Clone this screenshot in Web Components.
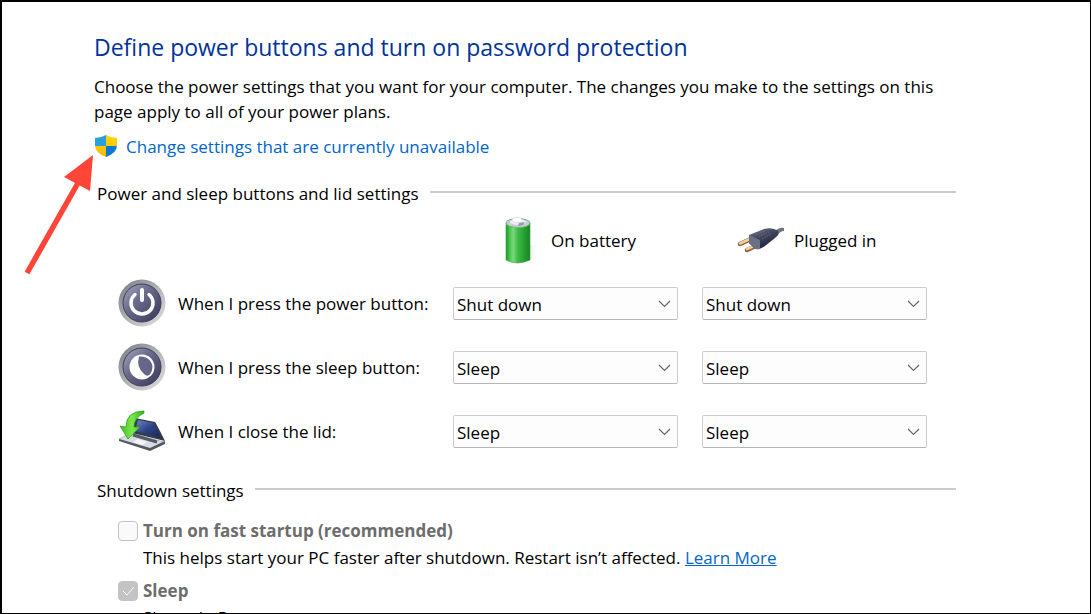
<!DOCTYPE html>
<html lang="en">
<head>
<meta charset="utf-8">
<title>Power button settings</title>
<style>
html,body{margin:0;height:100%}
body{font-family:"Open Sans","Noto Sans",sans-serif;font-size:17px;line-height:25px;color:#000;background:#fff;overflow:hidden}
</style>
</head>
<body>
<power-page></power-page>
<script>
const icons={
shield:`<svg width="24" height="24" viewBox="0 0 24 24"><defs><linearGradient id="y" x2="0" y2="1"><stop stop-color="#ffd900"/><stop offset="1" stop-color="#f9b70b"/></linearGradient><clipPath id="c"><path d="M12 1Q7 4 1 4V11Q1 19 12 23Q23 19 23 11V4Q17 4 12 1Z"/></clipPath></defs><g clip-path="url(#c)"><path fill="#27a0df" d="M0 0h12v12H0z"/><path fill="url(#y)" d="M12 0h12v12H12zM0 12h12v12H0z"/><path fill="#0878d1" d="M12 12h12v12H12z"/></g></svg>`,
battery:`<svg width="40" height="50" viewBox="0 0 40 50"><defs><linearGradient id="g"><stop stop-color="#139b24"/><stop offset=".18" stop-color="#51c957"/><stop offset=".3" stop-color="#7bd87b"/><stop offset=".5" stop-color="#3cba44"/><stop offset="1" stop-color="#138621"/></linearGradient><linearGradient id="s"><stop stop-color="#777"/><stop offset="1" stop-color="#fff" stop-opacity="0"/></linearGradient></defs><path fill="url(#s)" opacity=".7" d="M28 29 36 31Q40 34 36 38L27 46 18 48Z"/><path fill="url(#g)" stroke="#3aa546" stroke-width=".6" d="M5 8V45Q16 51 29 45V8Z"/><ellipse cx="17" cy="8" rx="12" ry="4.500" fill="#c9cbd9" stroke="#65bd69"/><ellipse cx="17" cy="7" rx="8" ry="3" fill="#ededf6"/><ellipse cx="16" cy="5" rx="5" ry="2.500" fill="#fff" stroke="#c8c8d3" stroke-width=".5"/><path d="M18 8 24 7 22 10 17 11Z" fill="#9696aa"/></svg>`,
plug:`<svg width="50" height="28" viewBox="0 0 50 28"><defs><linearGradient id="p" x2=".6" y2="1"><stop stop-color="#787b91"/><stop offset=".45" stop-color="#45485f"/><stop offset="1" stop-color="#1d2136"/></linearGradient></defs><path d="M38 6Q43 1 48 2V5Q44 5 41 10Z" fill="#71777c"/><g stroke-linecap="round"><path d="M4 18 17 12M11 24 24 18" stroke="#8f6141" stroke-width="4.500"/><path d="M4 17.500 17 11.500M11 23 24 17.500" stroke="#f1cf9d" stroke-width="2.500"/></g><path d="M13 9 28 3Q37 1 42 5 44 8 39 12L29 20Q22 25 18 22L13 17Z" fill="url(#p)"/><path d="M13 9 24 14 24 23Q20 24 18 22L13 17Z" fill="#6c7084"/><path d="M20 9 29 5M23 11 33 6M26 13 35 8" stroke="#777b93" stroke-width=".8" stroke-dasharray="1 1"/></svg>`,
power:`<svg width="48" height="48" viewBox="0 0 48 48"><defs><linearGradient id="r" x2="1" y2="1"><stop stop-color="#777980"/><stop offset=".55" stop-color="#b7b7b9"/><stop offset="1" stop-color="#e0e0e0"/></linearGradient><linearGradient id="d" x2="1" y2="1"><stop stop-color="#aaaac5"/><stop offset=".4" stop-color="#6b6b8d"/><stop offset="1" stop-color="#363657"/></linearGradient></defs><circle cx="24" cy="24" r="23.500" fill="url(#r)"/><circle cx="24" cy="24" r="19" fill="url(#d)" stroke="#383c58"/><path d="M17 15.500A11 11 0 1 0 31 15.500" fill="none" stroke="#fff" stroke-width="3.500" stroke-linecap="round"/><path d="M24 11V21" stroke="#fff" stroke-width="4" stroke-linecap="round"/></svg>`,
laptop:`<svg width="48" height="44" viewBox="0 0 48 44"><defs><linearGradient id="l" x2="1" y2="1"><stop stop-color="#7189c4"/><stop offset=".5" stop-color="#2c4188"/><stop offset="1" stop-color="#182556"/></linearGradient><linearGradient id="a" x2="1"><stop stop-color="#3cbd22"/><stop offset=".5" stop-color="#7ee84a"/><stop offset="1" stop-color="#2fae1a"/></linearGradient></defs><path d="M1 30 13 24 46 33 32 40Z" fill="#d7dce2" stroke="#a4a9b1" stroke-width=".7"/><path d="M1 30 32 39 47 32V35L32 42 1 32Z" fill="#55595f"/><path d="M17 9 37 13Q38 14 47 32L14 24Z" fill="#343b49"/><path d="M20 11 36 14 43 29 17 22Z" fill="url(#l)"/><path d="M15 26 39 33" stroke="#555b66" stroke-width="3"/><path d="M20 30 29 33 24 36 15 33Z" fill="#f3f5f7"/><path d="M26 2Q8 2 8 18L2 17 10 30 22 18 16 18Q16 9 26 4Z" fill="url(#a)" stroke="#2a9d1c" stroke-width=".7"/></svg>`
};
icons.sleep=icons.power.replace(/<path[\s\S]*<\/svg>/,'<circle cx="24" cy="24" r="12.500" fill="#fff"/><path d="M21 13.500Q28 13 32 17.500 37 24 32 31.500 29 34 26 31 18 24 21 13.500Z" fill="#66668b"/></svg>');
const define=(name,css,html)=>customElements.define(name,class extends HTMLElement{
 connectedCallback(){
  if(this.shadowRoot)return;
  const root=this.attachShadow({mode:'open'});
  root.innerHTML=`<style>*{box-sizing:border-box}:host{display:block}${css}</style>${typeof html==='function'?html(this):html}`;
 }
});
define('power-icon','svg{display:block}',e=>icons[e.getAttribute('name')]);
define('settings-group','h2{display:flex;align-items:center;gap:11px;margin:0 0 0 3px;font-size:17px;line-height:26px;font-weight:400}h2:after{content:"";height:2px;flex:1;background:#ccc;margin-bottom:4px}',e=>`<section><h2><span>${e.getAttribute('heading')}</span></h2><slot></slot></section>`);
define('power-columns',':host{display:grid;grid-template-columns:311px minmax(0,225px) minmax(0,225px);column-gap:24px;padding:8px 0 6px 24px}.col{display:flex;align-items:center;height:50px;white-space:nowrap}.battery{grid-column:2;padding-left:48px;gap:10px}.plug{padding-left:34px;gap:8px}',
`<div class="col battery"><power-icon name="battery"></power-icon><span>On battery</span></div><div class="col plug"><power-icon name="plug"></power-icon><span>Plugged in</span></div>`);
define('setting-row',':host{display:grid;grid-template-columns:311px minmax(0,225px) minmax(0,225px);gap:24px;align-items:center;height:64px;padding-left:24px}.name{display:flex;align-items:center;gap:12px;white-space:nowrap}.box{display:block;position:relative}select{appearance:none;display:block;width:100%;height:33px;border:1px solid #ccc;border-bottom-color:#b5b5b5;border-radius:2px;background:#fdfdfd;color:#000;font:inherit;padding:2px 28px 0 3px}svg.v{position:absolute;right:7px;top:13px;pointer-events:none}',
e=>{const box=(id,label)=>`<span class="box"><select id="${id}" aria-label="${label}">${['Do nothing','Sleep','Hibernate','Shut down'].map(v=>`<option${v===e.getAttribute('value')?' selected':''}>${v}</option>`).join('')}</select><svg class="v" width="13" height="8" viewBox="0 0 13 8"><path d="M1 1 6.500 6.500 12 1" fill="none" stroke="#666" stroke-width="1.200"/></svg></span>`,t=e.getAttribute('label');return`<label class="name" for="battery"><power-icon name="${e.getAttribute('icon')}"></power-icon><span>${t}</span></label>${box('battery',t+' On battery')}${box('plugged',t+' Plugged in')}`});
define('check-option',':host{padding-left:24px}.row{display:flex;align-items:center;gap:5px;height:26px}input{appearance:none;width:20px;height:20px;border:1px solid #c4c4c4;border-radius:4px;background:#fafafa;margin:2px 0 0}input:checked{background:#c3c3c3 url("data:image/svg+xml,%3Csvg xmlns=\'http://www.w3.org/2000/svg\' width=\'18\' height=\'18\'%3E%3Cpath d=\'M4 9l4 4 7-8\' fill=\'none\' stroke=\'white\'/%3E%3C/svg%3E") center no-repeat}label{font-weight:700;color:#6d6d6d}.desc{padding:2px 0 7px 25px;line-height:25px}',
e=>`<div class="row"><input id="option" type="checkbox" disabled ${e.hasAttribute('checked')?'checked':''}><label for="option">${e.getAttribute('label')}</label></div><div class="desc"><slot></slot></div>`);
define('callout-arrow',':host{position:absolute;left:20px;top:148px;pointer-events:none}svg{display:block}','<svg width="76" height="128" viewBox="0 0 76 128"><path d="M5 123 56 33" stroke="#ff4438" stroke-width="5.500"/><path d="M71 5 42 27 68 41Z" fill="#ff4438"/></svg>');
define('power-page',':host{position:relative;height:100%;overflow:hidden;border:solid #000;border-width:2px 1px 1px 2px;box-sizing:border-box}main{padding:29px 134px 0 92px}h1{font-size:23px;line-height:32px;font-weight:400;color:#003399;margin:0 0 11px}p{margin:0}a{color:#0066cc}.admin{display:flex;align-items:center;gap:8px;height:24px;margin:10px 0 23px;text-decoration:none;width:max-content}.shutdown{margin-top:15px}.options{padding-top:13px}',
`<main><h1>Define power buttons and turn on password protection</h1><p>Choose the power settings that you want for your computer. The changes you make to the settings on this page apply to all of your power plans.</p>
<a class="admin" href="#change"><power-icon name="shield"></power-icon><span>Change settings that are currently unavailable</span></a>
<settings-group heading="Power and sleep buttons and lid settings"><power-columns></power-columns>
<setting-row icon="power" label="When I press the power button:" value="Shut down"></setting-row>
<setting-row icon="sleep" label="When I press the sleep button:" value="Sleep"></setting-row>
<setting-row icon="laptop" label="When I close the lid:" value="Sleep"></setting-row></settings-group>
<settings-group class="shutdown" heading="Shutdown settings"><div class="options">
<check-option label="Turn on fast startup (recommended)">This helps start your PC faster after shutdown. Restart isn’t affected. <a href="#learn">Learn More</a></check-option>
<check-option label="Sleep" checked>Shows in Power menu.</check-option></div></settings-group></main><callout-arrow></callout-arrow>`);
</script>
</body>
</html>
